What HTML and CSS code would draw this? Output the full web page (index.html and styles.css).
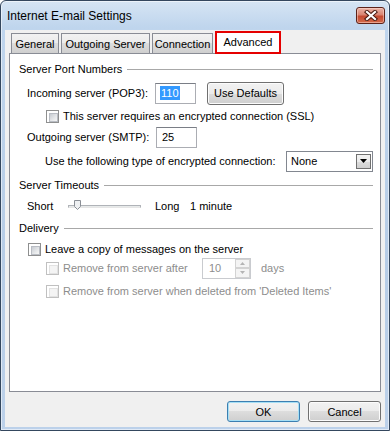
FILE: index.html
```html
<!DOCTYPE html>
<html lang="en">
<head>
    <meta charset="UTF-8">
    <meta name="viewport" content="width=device-width, initial-scale=1.0">
    <title>Internet E-mail Settings</title>
    <link rel="stylesheet" href="styles.css">
</head>
<body>
    <div class="window">
        <div class="titlebar">
            <span class="title">Internet E-mail Settings</span>
            <span class="close-btn">
                <svg width="14" height="11" viewBox="0 0 14 11">
                    <path d="M3 2 L11 9 M11 2 L3 9" stroke="#4a1a10" stroke-width="4.2" stroke-linecap="square"/>
                    <path d="M3 2 L11 9 M11 2 L3 9" stroke="#fff" stroke-width="2.2" stroke-linecap="square"/>
                </svg>
            </span>
        </div>

        <div class="client">
            <div class="tabs">
                <span class="tab tab-general">General</span>
                <span class="tab tab-outgoing">Outgoing Server</span>
                <span class="tab tab-connection">Connection</span>
                <span class="tab tab-advanced active">Advanced</span>
            </div>

            <div class="panel">
                <div class="group-title group-ports">Server Port Numbers</div>

                <div class="row row-incoming">
                    <span class="field-label">Incoming server (POP3):</span>
                    <span class="textbox port-in"><span class="selected">110</span></span>
                    <span class="btn btn-defaults">Use Defaults</span>
                </div>

                <div class="row row-ssl">
                    <span class="checkbox"></span>
                    <span>This server requires an encrypted connection (SSL)</span>
                </div>

                <div class="row row-outgoing">
                    <span class="field-label wide">Outgoing server (SMTP):</span>
                    <span class="textbox port-out">25</span>
                </div>

                <div class="row row-encryption">
                    <span class="enc-label">Use the following type of encrypted connection:</span>
                    <span class="combo">
                        <span class="combo-value">None</span>
                        <span class="combo-arrow">
                            <svg width="7" height="4" viewBox="0 0 7 4"><path d="M0 0 H7 L3.5 4 Z" fill="#000"/></svg>
                        </span>
                    </span>
                </div>

                <div class="group-title group-timeouts">Server Timeouts</div>

                <div class="row row-slider">
                    <span class="slider-label">Short</span>
                    <span class="slider">
                        <span class="slider-track"></span>
                        <svg class="slider-thumb" width="7" height="10" viewBox="0 0 7 10">
                            <path d="M0.5 0.5 H6.5 V6.5 L3.5 9.5 L0.5 6.5 Z" fill="#eef0f2" stroke="#8a8f96"/>
                        </svg>
                    </span>
                    <span class="slider-long">Long</span>
                    <span>1 minute</span>
                </div>

                <div class="group-title group-delivery">Delivery</div>

                <div class="row row-leave">
                    <span class="checkbox"></span>
                    <span>Leave a copy of messages on the server</span>
                </div>

                <div class="row row-remove-after disabled">
                    <span class="checkbox"></span>
                    <span class="remove-label">Remove from server after</span>
                    <span class="spinner">
                        <span class="spinner-value">10</span>
                        <span class="spinner-buttons">
                            <span class="spin-btn">
                                <svg width="5" height="3" viewBox="0 0 5 3"><path d="M0 3 H5 L2.5 0 Z" fill="#b4b4b4"/></svg>
                            </span>
                            <span class="spin-btn">
                                <svg width="5" height="3" viewBox="0 0 5 3"><path d="M0 0 H5 L2.5 3 Z" fill="#b4b4b4"/></svg>
                            </span>
                        </span>
                    </span>
                    <span class="days">days</span>
                </div>

                <div class="row row-remove-deleted disabled">
                    <span class="checkbox"></span>
                    <span>Remove from server when deleted from 'Deleted Items'</span>
                </div>
            </div>

            <div class="actions">
                <span class="btn btn-dialog default">OK</span>
                <span class="btn btn-dialog">Cancel</span>
            </div>
        </div>
    </div>
</body>
</html>
```

FILE: styles.css
```css
* {
    margin: 0;
    padding: 0;
    box-sizing: border-box;
}

body {
    width: 392px;
    height: 433px;
    background: #ffffff;
    font-family: 'Liberation Sans', Arial, sans-serif;
    font-size: 11px;
    color: #000;
}

.window {
    width: 390px;
    height: 431px;
    border: 1px solid #34475e;
    border-radius: 6px 6px 0 0;
    background: linear-gradient(180deg, #d6e5f4 0, #bfd5ed 26px, #b6cce6 60%, #bcd1ea 100%);
    box-shadow: inset 0 0 0 1px rgba(255, 255, 255, 0.55);
    padding: 0 4px 3px 4px;
    display: flex;
    flex-direction: column;
}

/* title bar */
.titlebar {
    height: 29px;
    display: flex;
    align-items: center;
    justify-content: space-between;
}

.title {
    font-size: 12px;
    padding-left: 2px;
    color: #000;
}

.close-btn {
    width: 29px;
    height: 17px;
    border: 1px solid #5c2219;
    border-radius: 3px;
    background: linear-gradient(180deg, #eab3a6 0%, #d98471 45%, #c44a31 55%, #d36b4c 100%);
    box-shadow: inset 0 0 0 1px rgba(255, 220, 210, 0.5);
    display: flex;
    align-items: center;
    justify-content: center;
}

/* client area */
.client {
    flex: 1;
    background: #f0f0f0;
    padding: 3px 4px 5px 4px;
    display: flex;
    flex-direction: column;
}

.tabs {
    height: 20px;
    display: flex;
    align-items: flex-end;
    padding-left: 2px;
    gap: 2px;
    position: relative;
    z-index: 1;
}

.tab {
    height: 20px;
    border: 1px solid #898c95;
    border-bottom: none;
    background: linear-gradient(180deg, #f2f2f2 0%, #ebebeb 50%, #dddddd 50%, #cfcfcf 100%);
    display: flex;
    align-items: center;
    justify-content: center;
}

.tab-general { width: 48px; }
.tab-outgoing { width: 89px; }
.tab-connection { width: 61px; }

.tab.active {
    width: 66px;
    height: 23px;
    margin-bottom: -1px;
    background: #ffffff;
    border: 2px solid #e50000;
    padding-bottom: 2px;
}

.panel {
    flex: 1;
    border: 1px solid #898c95;
    background: #ffffff;
    padding: 0 7px 0 9px;
}

/* group headings */
.group-title {
    height: 18px;
    display: flex;
    align-items: center;
}

.group-title::after {
    content: "";
    flex: 1;
    height: 1px;
    margin-left: 5px;
    background: #a8a8a8;
    box-shadow: 0 1px 0 #ffffff;
}

.group-ports { margin-top: 6px; }
.group-timeouts { margin-top: 6px; }
.group-delivery { margin-top: 4px; }

/* rows */
.row {
    height: 18px;
    display: flex;
    align-items: center;
}

.row-incoming { margin-top: 6px; padding-left: 8px; }
.row-ssl { margin-top: 5px; padding-left: 27px; }
.row-outgoing { margin-top: 3px; padding-left: 8px; }
.row-encryption { margin-top: 6px; padding-left: 26px; }
.row-slider { margin-top: 3px; padding-left: 8px; }
.row-leave { margin-top: 3px; padding-left: 9px; }
.row-remove-after { margin-top: 1px; padding-left: 27px; }
.row-remove-deleted { margin-top: 5px; padding-left: 27px; }

.field-label { width: 128px; }
.field-label.wide { width: 129px; }

.textbox {
    height: 21px;
    border: 1px solid #abadb3;
    border-top-color: #7a7e86;
    background: #fff;
    display: flex;
    align-items: center;
    padding-left: 5px;
    flex-shrink: 0;
}

.port-in { width: 41px; padding-left: 4px; }
.port-out { width: 41px; }

.selected {
    background: #3399ff;
    color: #fff;
    padding: 1px 1px;
}

.btn {
    height: 22px;
    border: 1px solid #707070;
    border-radius: 3px;
    background: linear-gradient(180deg, #f2f2f2 0%, #ebebeb 50%, #dddddd 50%, #cfcfcf 100%);
    box-shadow: inset 0 0 0 1px #fcfcfc;
    display: flex;
    align-items: center;
    justify-content: center;
    flex-shrink: 0;
}

.btn-defaults {
    width: 77px;
    height: 23px;
    margin-left: 11px;
}

/* checkboxes */
.checkbox {
    width: 13px;
    height: 13px;
    border: 1px solid #8e8f8f;
    background: #fff;
    margin-right: 4px;
    padding: 2px;
    flex-shrink: 0;
}

.checkbox::after {
    content: "";
    display: block;
    width: 7px;
    height: 7px;
    background: linear-gradient(135deg, #c8ccd2 0%, #e6e8ea 60%, #f6f6f6 100%);
    border: 1px solid #b9bdc4;
    width: 100%;
    height: 100%;
}

.disabled {
    color: #8d8d8d;
}

.disabled .checkbox {
    border-color: #c0c0c0;
}

.disabled .checkbox::after {
    background: #f4f4f4;
    border-color: #e2e2e2;
}

/* combo */
.enc-label { width: 241px; }

.combo {
    width: 87px;
    height: 21px;
    border: 1px solid #828790;
    background: #fff;
    display: flex;
    align-items: center;
    justify-content: space-between;
    padding: 1px 1px 1px 4px;
}

.combo-arrow {
    width: 15px;
    height: 15px;
    border: 1px solid #707070;
    background: linear-gradient(180deg, #f2f2f2 0%, #ebebeb 50%, #dddddd 50%, #cfcfcf 100%);
    display: flex;
    align-items: center;
    justify-content: center;
}

/* slider */
.slider-label { width: 41px; }

.slider {
    width: 73px;
    height: 12px;
    position: relative;
    display: flex;
    align-items: center;
}

.slider-track {
    width: 100%;
    height: 3px;
    border: 1px solid #b0b3b8;
    border-bottom-color: #e6e6e6;
    background: #e7eaea;
}

.slider-thumb {
    position: absolute;
    left: 6px;
    top: 0;
}

.slider-long {
    width: 35px;
    margin-left: 14px;
}

/* spinner */
.remove-label { width: 139px; }

.spinner {
    width: 49px;
    height: 21px;
    border: 1px solid #c9cbcf;
    background: #fff;
    display: flex;
    justify-content: space-between;
    color: #6d6d6d;
}

.spinner-value {
    display: flex;
    align-items: center;
    padding-left: 6px;
    color: #8d8d8d;
}

.spinner-buttons {
    width: 15px;
    display: flex;
    flex-direction: column;
}

.spin-btn {
    flex: 1;
    border: 1px solid #d3d3d3;
    background: #f4f4f4;
    display: flex;
    align-items: center;
    justify-content: center;
}

.days { margin-left: 10px; }

/* dialog buttons */
.actions {
    margin-top: 9px;
    display: flex;
    justify-content: flex-end;
    gap: 8px;
}

.btn-dialog {
    width: 73px;
    height: 21px;
}

.btn-dialog.default {
    border-color: #3c7fb1;
    box-shadow: inset 0 0 0 1px #a6dff5;
}
```
